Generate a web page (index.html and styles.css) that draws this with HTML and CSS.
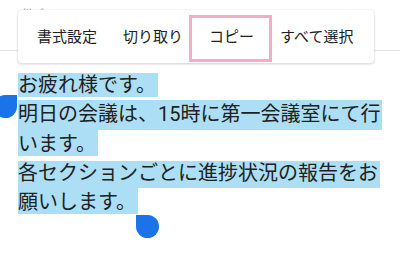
FILE: index.html
```html
<!DOCTYPE html>
<html lang="ja">
<head>
<meta charset="utf-8">
<link rel="stylesheet" href="styles.css">
</head>
<body>
<div class="page">
  <div class="header"><span class="subject">件名</span></div>
  <div class="body">
    <div class="para">
      <div class="line sel cut-top cut-bottom">お疲れ様です。</div>
    </div>
    <div class="para">
      <div class="line sel">明日の会議は、15時に第一会議室にて行</div>
      <div class="line sel cut-bottom">います。</div>
    </div>
    <div class="para">
      <div class="line sel cut-top">各セクションごとに進捗状況の報告をお</div>
      <div class="line sel cut-bottom">願いします。</div>
    </div>
  </div>

  <div class="handle handle-start"></div>
  <div class="handle handle-end"></div>

  <div class="toolbar">
    <span class="item">書式設定</span>
    <span class="item">切り取り</span>
    <span class="item">コピー</span>
    <span class="item">すべて選択</span>
  </div>
  <div class="focus-ring"></div>
</div>
</body>
</html>
```

FILE: styles.css
```css
* { box-sizing: border-box; }
html, body {
  margin: 0;
  padding: 0;
  background: #ffffff;
}
body {
  width: 400px;
  height: 259px;
  overflow: hidden;
  font-family: Roboto, "Noto Sans CJK JP", sans-serif;
  color: #202020;
}
.page {
  position: relative;
  width: 400px;
  height: 259px;
}
.header {
  height: 51px;
  border-bottom: 1px solid #e6e6e6;
  padding: 7px 0 0 20px;
}
.subject {
  font-size: 16px;
  line-height: 20px;
  color: #b8b8b8;
}
.body {
  padding: 20px 0 0 18px;
}
.line {
  width: fit-content;
  font-size: 20px;
  line-height: 29.25px;
  height: 29.25px;
  white-space: nowrap;
  padding-right: 2px;
}
.sel {
  background: #acdff6;
}
.sel.cut-top {
  background: linear-gradient(to bottom, transparent 2px, #acdff6 2px);
}
.sel.cut-bottom {
  background: linear-gradient(to top, transparent 3px, #acdff6 3px);
}
.sel.cut-top.cut-bottom {
  background: linear-gradient(to bottom, transparent 2px, #acdff6 2px, #acdff6 26px, transparent 26px);
}
.handle {
  position: absolute;
  width: 23px;
  height: 23px;
  background: #1a73e8;
}
.handle-start {
  left: -6px;
  top: 95px;
  border-radius: 50% 0 50% 50%;
}
.handle-end {
  left: 136px;
  top: 215px;
  border-radius: 0 50% 50% 50%;
}
.toolbar {
  position: absolute;
  left: 18px;
  top: 10px;
  width: 356px;
  height: 53px;
  display: flex;
  align-items: center;
  padding: 1px 6px 0;
  background: #ffffff;
  border-radius: 4px;
  box-shadow: 0 1px 3px rgba(0, 0, 0, 0.18), 0 0 1px rgba(0, 0, 0, 0.14);
}
.item {
  padding: 0 13px;
  font-size: 15px;
  line-height: 20px;
  color: #202020;
  white-space: nowrap;
}
.focus-ring {
  position: absolute;
  left: 189px;
  top: 15px;
  width: 83px;
  height: 47px;
  border: 3px solid #f8aac9;
}
```
